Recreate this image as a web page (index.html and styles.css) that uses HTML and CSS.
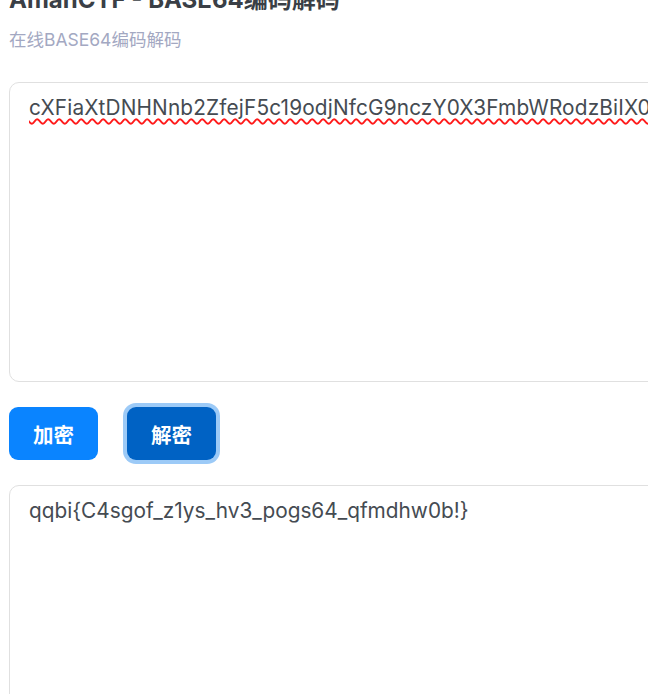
FILE: index.html
```html
<!DOCTYPE html>
<html lang="zh">
<head>
<meta charset="utf-8">
<title>AmanCTF - BASE64编码解码</title>
<link rel="stylesheet" href="styles.css">
</head>
<body>
<main class="page">
  <h1 class="title">AmanCTF - BASE64编码解码</h1>
  <p class="subtitle">在线BASE64编码解码</p>
  <div class="box box-input"><span class="misspelled">cXFiaXtDNHNnb2ZfejF5c19odjNfcG9nczY0X3FmbWRodzBiIX0=</span></div>
  <div class="actions">
    <button class="btn" type="button">加密</button>
    <button class="btn btn-active" type="button">解密</button>
  </div>
  <div class="box box-output">qqbi{C4sgof_z1ys_hv3_pogs64_qfmdhw0b!}</div>
</main>
</body>
</html>
```
FILE: styles.css
```css
html, body {
  margin: 0;
  padding: 0;
  overflow: hidden;
  background: #ffffff;
}
body {
  font-family: Inter, "Noto Sans CJK SC", sans-serif;
  color: #444a52;
}
.page {
  padding: 0 0 0 9px;
  margin-top: -15px;
  width: 760px;
}
.title {
  margin: 0;
  font-size: 24px;
  line-height: 30px;
  font-weight: 700;
  color: #3a3f46;
}
.subtitle {
  margin: 12px 0 0 0;
  font-size: 17.5px;
  line-height: 26px;
  color: #a3a8c2;
}
.box {
  box-sizing: border-box;
  width: 740px;
  border: 1px solid #e0e0e0;
  border-radius: 10px;
  padding: 9px 19px;
  font-size: 20.8px;
  line-height: 31px;
  color: #454b52;
  white-space: nowrap;
  overflow: hidden;
}
.box-input {
  margin-top: 29px;
  height: 300px;
}
.box-output {
  height: 260px;
}
.misspelled {
  letter-spacing: 0.15px;
  text-decoration: underline wavy #ff1a1a;
  text-decoration-thickness: 1.5px;
  text-decoration-skip-ink: none;
  text-underline-offset: 3px;
}
.actions {
  display: flex;
  gap: 29px;
  padding: 25px 0 25px 0;
}
.btn {
  width: 89px;
  height: 53px;
  border: none;
  border-radius: 9px;
  background: #0a84ff;
  color: #ffffff;
  font-family: Inter, "Noto Sans CJK SC", sans-serif;
  font-size: 20.5px;
  font-weight: 700;
  cursor: pointer;
}
.btn-active {
  background: #0062c4;
  box-shadow: 0 0 0 4px #9ccaf7;
}
```
